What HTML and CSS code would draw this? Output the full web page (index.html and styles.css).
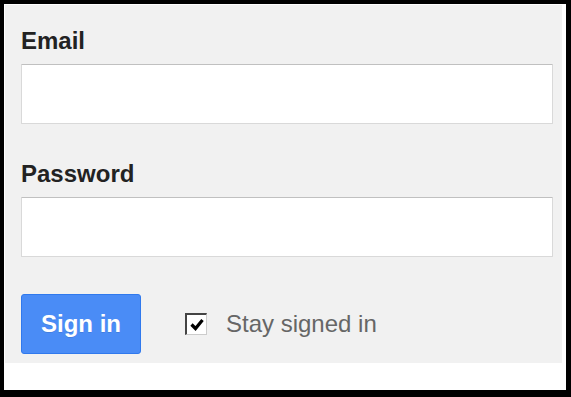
FILE: index.html
```html
<!DOCTYPE html>
<html>
<head>
<meta charset="utf-8">
<link rel="stylesheet" href="styles.css">
</head>
<body>
<div class="frame">
  <form class="panel">
    <label class="label">Email</label>
    <div class="field"></div>
    <label class="label label-second">Password</label>
    <div class="field"></div>
    <div class="actions">
      <button class="btn" type="button">Sign in</button>
      <span class="check">
        <span class="box"><svg width="14" height="13" viewBox="0 0 14 13"><path d="M1.5 6.5 L5.5 10.5 L12.5 2" fill="none" stroke="#000" stroke-width="3.2"/></svg></span>
        <span class="check-text">Stay signed in</span>
      </span>
    </div>
  </form>
</div>
</body>
</html>
```
FILE: styles.css
```css
html, body {
  margin: 0;
  padding: 0;
}
body {
  width: 571px;
  height: 397px;
  font-family: "Liberation Sans", Arial, sans-serif;
}
.frame {
  box-sizing: border-box;
  width: 571px;
  height: 397px;
  border-style: solid;
  border-color: #000;
  border-width: 4px 5px 7px 4px;
  background: #fff;
  padding: 1px 4px 0 1px;
}
.panel {
  display: flex;
  flex-direction: column;
  margin: 0;
  background: #f1f1f1;
  padding: 22px 9px 9px 16px;
}
.label {
  display: block;
  font-size: 24px;
  line-height: 28px;
  font-weight: bold;
  color: #222;
  margin-bottom: 9px;
}
.label-second {
  margin-top: 36px;
}
.field {
  box-sizing: border-box;
  width: 532px;
  height: 60px;
  background: #fff;
  border: 1px solid #d9d9d9;
  border-top-color: #c0c0c0;
  border-radius: 1px;
}
.actions {
  display: flex;
  align-items: center;
  margin-top: 37px;
}
.btn {
  box-sizing: border-box;
  width: 120px;
  height: 60px;
  margin: 0;
  padding: 0;
  border: 1px solid #3079ed;
  border-radius: 3px;
  background: #4a8cf6;
  color: #fff;
  font-family: "Liberation Sans", Arial, sans-serif;
  font-size: 24px;
  font-weight: bold;
  text-shadow: 0 1px rgba(0,0,0,0.1);
}
.check {
  display: flex;
  align-items: center;
  margin-left: 44px;
}
.box {
  box-sizing: border-box;
  width: 22px;
  height: 22px;
  display: flex;
  align-items: center;
  justify-content: center;
  background: #fff;
  border-style: solid;
  border-width: 2px 1px 1px 2px;
  border-color: #444 #ccc #ccc #444;
}
.check-text {
  margin-left: 19px;
  font-size: 24px;
  color: #666;
}
```
